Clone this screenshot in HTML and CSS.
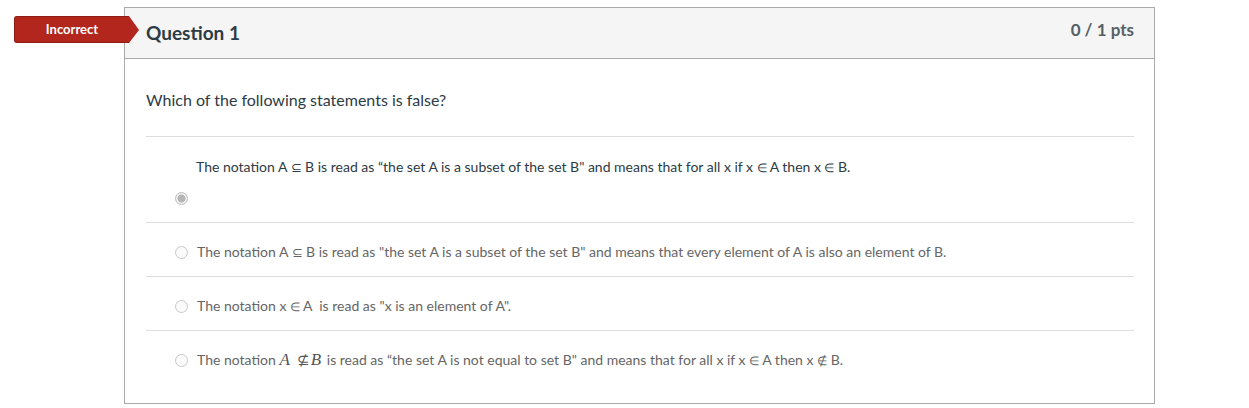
FILE: index.html
```html
<!DOCTYPE html>
<html>
<head>
<meta charset="utf-8">
<link rel="stylesheet" href="styles.css">
</head>
<body>
<div class="page">
  <div class="question">
    <div class="badge">Incorrect</div>
    <div class="header">
      <span class="title">Question 1</span>
      <span class="pts">0 / 1 pts</span>
    </div>
    <div class="body">
      <div class="prompt">Which of the following statements is false?</div>
      <div class="answers">
        <div class="answer selected">
          <div class="atext">The notation A <span class="sub">⊆</span> B is read as “the set A is a subset of the set B" and means that for all x if x <span class="sym">∈</span> A then x <span class="sym">∈</span> B.</div>
          <div class="radio-row"><span class="radio checked"></span></div>
        </div>
        <div class="answer">
          <span class="radio"></span>
          <div class="atext">The notation A <span class="sub">⊆</span> B is read as "the set A is a subset of the set B" and means that every element of A is also an element of B.</div>
        </div>
        <div class="answer">
          <span class="radio"></span>
          <div class="atext">The notation x <span class="sym">∈</span> A&nbsp; is read as "x is an element of A".</div>
        </div>
        <div class="answer last">
          <span class="radio"></span>
          <div class="atext">The notation <span class="math"><i>A</i><span class="notsub">⊈</span><i>B</i></span> is read as “the set A is not equal to set B" and means that for all x if x <span class="sym">∈</span> A then x <span class="sym">∉</span> B.</div>
        </div>
      </div>
    </div>
  </div>
</div>
</body>
</html>
```
FILE: styles.css
```css
* { box-sizing: border-box; }
html, body { margin: 0; padding: 0; background: #fff; }
body { font-family: Lato, "Open Sans", sans-serif; color: #2d3b45; }
.page { padding: 7px 0 0 124px; width: 1155px; }
.question { position: relative; border: 1px solid #aaa; width: 1031px; background: #fff; }
.badge {
  position: absolute; left: -111px; top: 8px;
  width: 115px; height: 27px;
  background: #b3261e; color: #fff;
  font-weight: 700; font-size: 13px; line-height: 25px;
  text-align: center; border-radius: 3px 0 0 3px;
  border: 1px solid #8f1d17; border-right: none;
}
.badge::after {
  content: ""; position: absolute; right: -10px; top: -1px;
  border-top: 14px solid transparent; border-bottom: 13px solid transparent;
  border-left: 10px solid #b3261e;
}
.header {
  display: flex; justify-content: space-between; align-items: flex-start;
  background: #f5f5f5; border-bottom: 1px solid #aaa;
  height: 51px; padding: 12px 20px 0 21px;
}
.title { font-size: 19px; font-weight: 700; line-height: 24px; margin-top: 1px; }
.pts { font-size: 17px; font-weight: 700; color: #555f67; line-height: 20px; margin-top: 0; }
.body { padding: 0 20px 0 21px; }
.prompt { font-size: 16px; line-height: 22px; padding: 30px 0 25px; border-bottom: 1px solid #ddd; }
.answer { display: flex; flex-wrap: wrap; align-items: center; gap: 9px; padding: 19px 0 14px 29px; border-bottom: 1px solid #ddd; font-size: 14px; line-height: 20px; color: #666; }
.atext { height: 20px; }
.answer.last { border-bottom: none; padding-bottom: 33px; }
.answer.selected { display: block; padding-left: 0; padding-top: 20px; padding-bottom: 14px; color: #2d3b45; }
.answer.selected .atext { padding-left: 50px; }
.radio-row { height: 20px; margin-top: 11px; padding-left: 29px; display: flex; align-items: center; }
.radio { display: inline-block; width: 13px; height: 13px; border: 1px solid #c9c9c9; border-radius: 50%; background: #fafafa; flex: none; }
.radio.checked { border-color: #bbb; background: radial-gradient(circle, #b5b5b5 0 3.8px, #f3f3f3 4.3px); }
.sym { font-size: 12px; line-height: 0; }
.sub { font-size: 13px; line-height: 0; }
.math { font-family: "Liberation Serif", serif; font-size: 17px; color: #555; line-height: 0; }
.math i { font-style: italic; }
.notsub { margin: 0 1px 0 7px; font-size: 15px; }
.math i + .notsub + i { margin-right: 2px; }
```
